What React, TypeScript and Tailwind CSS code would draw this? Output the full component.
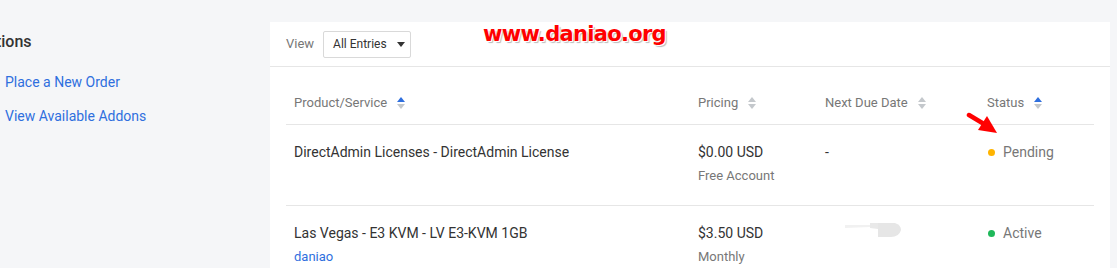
import React from "react";

function SortIcon({ active }: { active?: boolean }) {
  return (
    <svg width="8" height="14" viewBox="0 0 8 14" className="ml-[10px] inline-block">
      <path d="M4 1 L8 6 L0 6 Z" fill={active ? "#2f6fde" : "#c4c8cc"} />
      <path d="M4 13 L8 8 L0 8 Z" fill="#c4c8cc" />
    </svg>
  );
}

export default function App() {
  return (
    <div
      className="w-[1117px] h-[268px] overflow-hidden bg-[#f5f6f8] flex relative"
      style={{ fontFamily: "Roboto, 'Liberation Sans', sans-serif" }}
    >
      {/* Sidebar */}
      <div className="w-[270px] shrink-0 overflow-hidden pt-[30px]">
        <div className="ml-[-23px] text-[16px] font-medium text-[#333] leading-[24px]">Actions</div>
        <div className="mt-[16px] flex flex-col gap-[10px] pl-[5px] text-[14px] text-[#2f6fde] leading-[24px]">
          <div>Place a New Order</div>
          <div>View Available Addons</div>
        </div>
      </div>

      {/* Card */}
      <div className="mt-[22px] w-[840px] bg-white relative">
        <div className="h-[45px] border-b border-[#e6e6e6] flex items-center pl-[16px]">
          <span className="text-[13px] text-[#777]">View</span>
          <div className="ml-[9px] h-[27px] w-[88px] border border-[#d9d9d9] rounded-[2px] flex items-center pl-[9px] text-[12px] text-[#333]">
            All Entries
            <svg width="8" height="5" viewBox="0 0 8 5" className="ml-[10px]">
              <path d="M0 0 L8 0 L4 5 Z" fill="#333" />
            </svg>
          </div>
          <div
            className="ml-[72px] mb-[18px] text-[21px] font-bold text-[#ff0000] tracking-[-0.7px]"
            style={{ fontFamily: "'DejaVu Sans', Verdana, sans-serif", textShadow: "1px 1px 0 #fff, 2px 2px 1px #bbb" }}
          >
            www.daniao.org
          </div>
        </div>

        <div className="px-[16px]">
          <div className="grid grid-cols-[404px_127px_162px_1fr] text-[13px] text-[#777] border-b border-[#e6e6e6] pt-[24px] pb-[9px] leading-[24px]">
            <div className="pl-[8px] flex items-center">Product/Service<SortIcon active /></div>
            <div className="pl-[8px] flex items-center">Pricing<SortIcon /></div>
            <div className="pl-[8px] flex items-center">Next Due Date<SortIcon /></div>
            <div className="pl-[8px] flex items-center">Status<SortIcon active /></div>
          </div>

          <div className="grid grid-cols-[404px_127px_162px_1fr] text-[14px] text-[#333] border-b border-[#e6e6e6] pt-[15px] pb-[17px] leading-[24px]">
            <div className="pl-[8px]">DirectAdmin Licenses - DirectAdmin License</div>
            <div className="pl-[8px]">
              <div>$0.00 USD</div>
              <div className="text-[13px] text-[#777]">Free Account</div>
            </div>
            <div className="pl-[8px]">-</div>
            <div className="pl-[9px] flex items-start text-[#777]">
              <span className="mt-[9px] w-[7px] h-[7px] rounded-full bg-[#ffb400]" />
              <span className="ml-[8px]">Pending</span>
            </div>
          </div>

          <div className="grid grid-cols-[404px_127px_162px_1fr] text-[14px] text-[#333] pt-[15px] pb-[16px] leading-[24px]">
            <div className="pl-[8px]">
              <div>Las Vegas - E3 KVM - LV E3-KVM 1GB</div>
              <div className="text-[13px] text-[#2f6fde]">daniao</div>
            </div>
            <div className="pl-[8px]">
              <div>$3.50 USD</div>
              <div className="text-[13px] text-[#777]">Monthly</div>
            </div>
            <div className="pl-[8px]">
              <svg width="90" height="24" viewBox="0 0 90 24">
                <path d="M20 4 L45 4 L45 6 L20 7 Z" fill="#f1f1f1" />
                <path d="M45 2 L53 2 L53 8 L45 7 Z" fill="#e9e9e9" />
                <path d="M53 2 L70 2 Q76 4 76 9 Q74 16 66 16 L53 16 Z" fill="#e6e6e6" />
              </svg>
            </div>
            <div className="pl-[9px] flex items-start text-[#777]">
              <span className="mt-[9px] w-[7px] h-[7px] rounded-full bg-[#1fb85a]" />
              <span className="ml-[8px]">Active</span>
            </div>
          </div>
        </div>

        {/* red arrow annotation */}
        <svg className="absolute left-[696px] top-[90px]" width="34" height="24" viewBox="0 0 34 24">
          <path d="M3 3 L18 12" stroke="#ff0000" strokeWidth="4.5" strokeLinecap="round" />
          <path d="M31 21 L12 18 L21 4 Z" fill="#ff0000" />
        </svg>
      </div>
    </div>
  );
}
